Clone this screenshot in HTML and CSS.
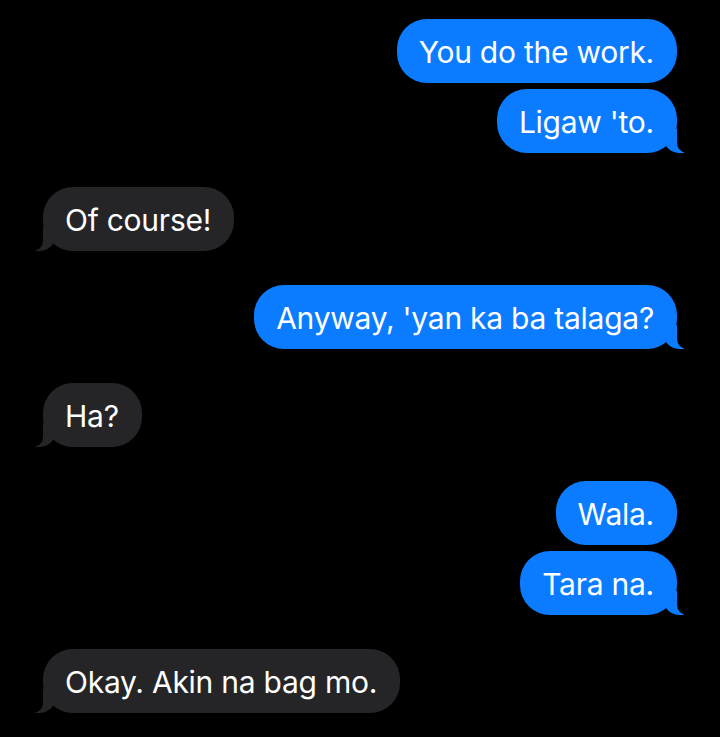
FILE: index.html
```html
<!DOCTYPE html>
<html lang="tl">
<head>
<meta charset="utf-8">
<title>Messages</title>
<link rel="stylesheet" href="styles.css">
</head>
<body>
<main class="thread">
  <div class="group sent">
    <div class="bubble">You do the work.</div>
    <div class="bubble tail">Ligaw 'to.</div>
  </div>
  <div class="group received">
    <div class="bubble tail">Of course!</div>
  </div>
  <div class="group sent">
    <div class="bubble tail">Anyway, 'yan ka ba talaga?</div>
  </div>
  <div class="group received">
    <div class="bubble tail">Ha?</div>
  </div>
  <div class="group sent">
    <div class="bubble">Wala.</div>
    <div class="bubble tail">Tara na.</div>
  </div>
  <div class="group received">
    <div class="bubble tail">Okay. Akin na bag mo.</div>
  </div>
</main>
</body>
</html>
```
FILE: styles.css
```css
html, body {
  margin: 0;
  padding: 0;
  background: #000;
}
body {
  width: 720px;
  height: 737px;
  overflow: hidden;
  font-family: Inter, "Noto Sans", "Liberation Sans", sans-serif;
}
.thread {
  display: flex;
  flex-direction: column;
  gap: 34px;
  padding: 19px 43px 0 43px;
}
.group {
  display: flex;
  flex-direction: column;
  gap: 6px;
}
.sent { align-items: flex-end; }
.received { align-items: flex-start; }
.bubble {
  position: relative;
  height: 64px;
  box-sizing: border-box;
  padding: 2px 23px 0 22px;
  display: flex;
  align-items: center;
  border-radius: 30px;
  font-size: 30px;
  letter-spacing: -0.25px;
  color: #fff;
  white-space: nowrap;
}
.sent .bubble { background: #0b7cff; }
.received .bubble { background: #252528; }

.bubble.tail::before,
.bubble.tail::after {
  content: "";
  position: absolute;
  bottom: 0;
  height: 24px;
}
.sent .bubble.tail::before {
  right: -7px;
  width: 20px;
  background: #0b7cff;
  border-bottom-left-radius: 16px 14px;
}
.sent .bubble.tail::after {
  right: -26px;
  width: 26px;
  background: #000;
  border-bottom-left-radius: 10px;
}
.received .bubble.tail::before {
  left: -8px;
  width: 20px;
  background: #252528;
  border-bottom-right-radius: 16px 14px;
}
.received .bubble.tail::after {
  left: -26px;
  width: 26px;
  background: #000;
  border-bottom-right-radius: 10px;
}
```
